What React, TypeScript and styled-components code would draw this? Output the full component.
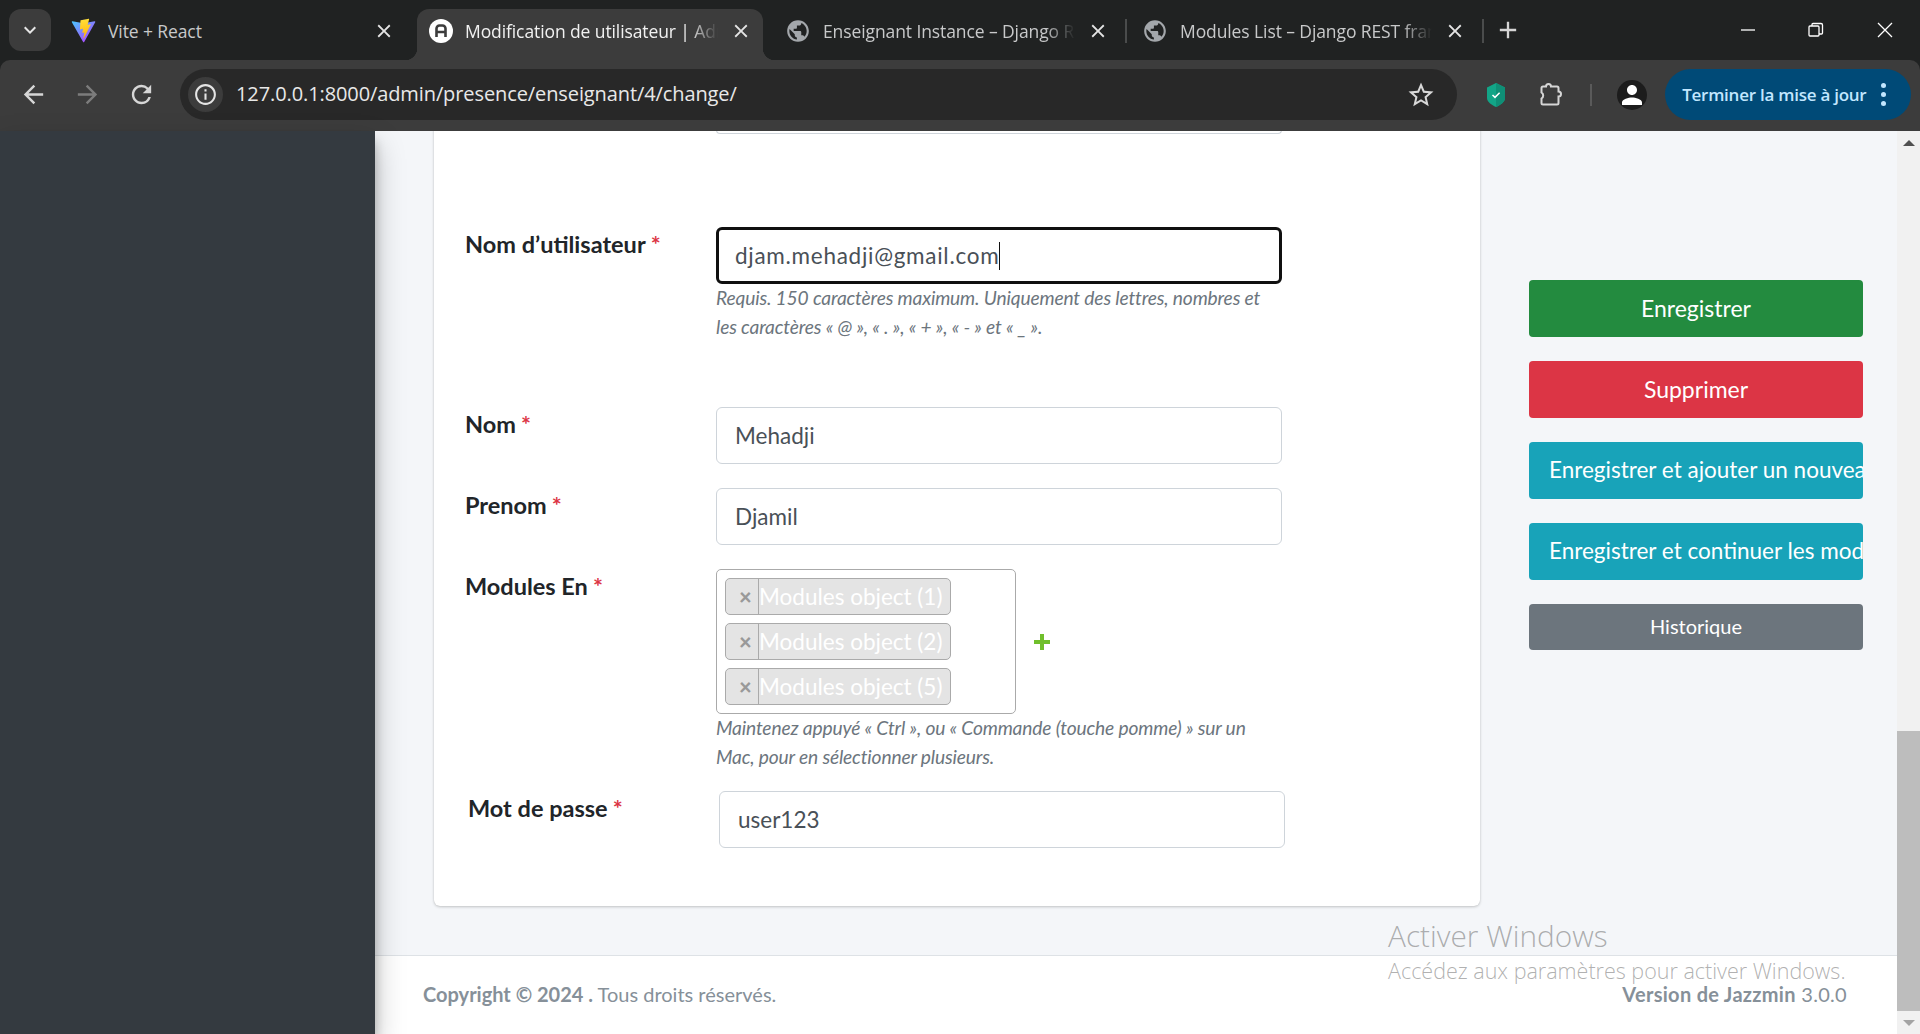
import { ReactElement, ReactNode } from "react"
import styled, { createGlobalStyle } from "styled-components"
import {
  MdAdd,
  MdArrowBack,
  MdArrowForward,
  MdClose,
  MdInfoOutline,
  MdKeyboardArrowDown,
  MdPerson,
  MdPublic,
  MdRefresh,
  MdStarBorder,
} from "react-icons/md"

const GlobalStyle = createGlobalStyle`
  html, body {
    margin: 0;
    padding: 0;
    overflow: hidden;
  }
  * {
    box-sizing: border-box;
  }
`

const Page = styled.div`
  display: flex;
  flex-direction: column;
  width: 1920px;
  height: 1034px;
  overflow: hidden;
  position: relative;
  background: #202222;
  font-family: Lato, "Noto Sans", sans-serif;
`

const TabStrip = styled.div`
  display: flex;
  align-items: flex-start;
  height: 60px;
  flex-shrink: 0;
  padding: 9px 0 0 9px;
  gap: 11px;
  font-family: "Open Sans", "Noto Sans", sans-serif;
`

const TabSearch = styled.div`
  display: flex;
  align-items: center;
  justify-content: center;
  width: 42px;
  height: 42px;
  margin-right: -2px;
  border-radius: 12px;
  background: #3c3c3c;
  color: #e6e6e6;
`

const Tab = styled.div<{ $active?: boolean; $divider?: boolean }>`
  display: flex;
  align-items: center;
  position: relative;
  width: 346px;
  height: 51px;
  padding: 0 11px 8px 12px;
  gap: 12px;
  border-radius: 12px 12px 0 0;
  background: ${({ $active }) => ($active ? "#3c3c3c" : "transparent")};
  color: ${({ $active }) => ($active ? "#f1f1f1" : "#c8c9ca")};

  &::after {
    content: "";
    display: ${({ $divider }) => ($divider ? "block" : "none")};
    position: absolute;
    right: -7px;
    top: 10px;
    width: 2px;
    height: 24px;
    background: #4a4c4c;
  }
`

const TabCorner = styled.span<{ $side: "left" | "right" }>`
  position: absolute;
  bottom: 0;
  ${({ $side }) => $side}: -12px;
  width: 12px;
  height: 12px;
  background: radial-gradient(
    circle at ${({ $side }) => ($side === "left" ? "0 0" : "100% 0")},
    transparent 12px,
    #3c3c3c 12.5px
  );
`

const TabTitle = styled.span<{ $fade?: boolean }>`
  flex: 1;
  min-width: 0;
  overflow: hidden;
  white-space: nowrap;
  font-size: 17.5px;
  letter-spacing: -0.1px;
  mask-image: ${({ $fade }) =>
    $fade ? "linear-gradient(to right, #000 88%, transparent 100%)" : "none"};
`

const TabClose = styled(MdClose)`
  flex-shrink: 0;
  font-size: 22px;
  color: #e4e4e4;
`

const GlobeIcon = styled(MdPublic)`
  flex-shrink: 0;
  font-size: 26px;
  color: #a3a7ab;
  margin-left: -1px;
`

const NewTab = styled(MdAdd)`
  font-size: 28px;
  color: #d6d6d6;
  margin: 7px 0 0 6px;
`

const WindowControls = styled.div`
  display: flex;
  margin: -9px 0 0 auto;
`

const WindowButton = styled.div<{ $wide?: boolean }>`
  display: flex;
  align-items: center;
  justify-content: center;
  width: ${({ $wide }) => ($wide ? "70px" : "68px")};
  height: 60px;
`

const Toolbar = styled.div`
  display: flex;
  align-items: center;
  height: 71px;
  flex-shrink: 0;
  padding: 0 9px 2px 0;
  background: #3c3c3c;
  border-radius: 10px 10px 0 0;
  color: #d4d4d4;
`

const NavIcon = styled.div<{ $dim?: boolean }>`
  display: flex;
  align-items: center;
  justify-content: center;
  width: 54px;
  color: ${({ $dim }) => ($dim ? "#7c7c7c" : "#d6d6d6")};
  font-size: 29px;
`

const NavGroup = styled.div`
  display: flex;
  padding-left: 6px;
`

const Omnibox = styled.div`
  display: flex;
  align-items: center;
  width: 1278px;
  height: 51px;
  margin-left: 12px;
  padding: 0 21px 0 8px;
  border-radius: 26px;
  background: #282828;
  font-family: "Open Sans", "Noto Sans", sans-serif;
`

const SiteInfo = styled.div`
  display: flex;
  align-items: center;
  justify-content: center;
  width: 35px;
  height: 35px;
  border-radius: 50%;
  background: #3c3c3c;
  font-size: 25px;
  color: #e4e4e4;
`

const Url = styled.span`
  flex: 1;
  margin: -2px 0 0 13px;
  font-size: 20px;
  color: #e8e8e8;
  letter-spacing: -0.1px;
`

const ToolIcons = styled.div`
  display: flex;
  align-items: center;
  margin-left: 30px;
`

const ToolDivider = styled.span`
  width: 2px;
  height: 22px;
  margin: 0 25px 0 25px;
  background: #5a5a5a;
`

const PuzzleMark = styled.svg`
  width: 26px;
  height: 26px;
  margin-left: 34px;
`

const Avatar = styled.div`
  display: flex;
  align-items: flex-end;
  justify-content: center;
  width: 30px;
  height: 30px;
  border-radius: 50%;
  background: #1c1c1c;
  color: #fff;
  font-size: 30px;
  overflow: hidden;
`

const UpdatePill = styled.div`
  display: flex;
  align-items: center;
  width: 246px;
  height: 51px;
  margin-left: 18px;
  padding-left: 17px;
  gap: 15px;
  border-radius: 26px;
  background: #004a77;
  color: #c2e7ff;
  font-family: "Open Sans", "Noto Sans", sans-serif;
  font-size: 17px;
  font-weight: 600;
  letter-spacing: -0.25px;
  white-space: nowrap;
`

const Dots = styled.span`
  display: flex;
  flex-direction: column;
  gap: 4px;

  i {
    width: 5px;
    height: 5px;
    border-radius: 50%;
    background: #c2e7ff;
  }
`

const Main = styled.div`
  display: flex;
  flex: 1;
  min-height: 0;
`

const Sidebar = styled.aside`
  width: 375px;
  flex-shrink: 0;
  background: #343a40;
  box-shadow: 0 14px 28px rgba(0, 0, 0, 0.25), 0 10px 10px rgba(0, 0, 0, 0.22);
  z-index: 1;
`

const Content = styled.div`
  display: flex;
  flex-direction: column;
  flex: 1;
  min-width: 0;
  background: #f4f6f9;
`

const Body = styled.div`
  display: flex;
  align-items: flex-start;
  flex: 1;
  min-height: 0;
  padding-left: 59px;
  overflow: hidden;
`

const Card = styled.div`
  width: 1046px;
  flex-shrink: 0;
  margin-top: -20px;
  padding: 0 0 58px 31px;
  background: #fff;
  border-radius: 6px;
  box-shadow: 0 0 1px rgba(0, 0, 0, 0.125), 0 1px 3px rgba(0, 0, 0, 0.2);
`

const StubRow = styled.div`
  height: 23px;
  width: 566px;
  margin-left: 251px;
  border: 1px solid #ced4da;
  border-top: none;
  border-radius: 0 0 4px 4px;
`

const FieldRow = styled.div<{ $top: number; $shift?: number }>`
  display: grid;
  grid-template-columns: 251px 566px;
  margin-top: ${({ $top }) => $top}px;
  padding-left: ${({ $shift }) => $shift ?? 0}px;
`

const Label = styled.label`
  font-size: 23.5px;
  line-height: 34px;
  font-weight: 700;
  color: #212529;
`

const Required = styled.span`
  color: #dc3545;
  margin-left: 5px;
`

const TextField = styled.div<{ $focused?: boolean }>`
  display: flex;
  align-items: center;
  height: 57px;
  border-radius: 6px;
  border: ${({ $focused }) =>
    $focused ? "3px solid #101010" : "1px solid #ced4da"};
  padding: 0 ${({ $focused }) => ($focused ? "16px" : "18px")};
  background: #fff;
  color: #495057;
  font-size: 22.5px;
  letter-spacing: ${({ $focused }) => ($focused ? "0.72px" : "0")};
`

const Caret = styled.span`
  width: 1px;
  height: 28px;
  background: #111;
`

const HelpText = styled.div`
  margin: -1px 0 1px;
  font-size: 19.2px;
  line-height: 29px;
  font-style: italic;
  color: #6c757d;
  letter-spacing: -0.15px;
`

const SelectLine = styled.div`
  display: flex;
  align-items: center;
  gap: 14px;
`

const MultiSelect = styled.div`
  display: flex;
  flex-direction: column;
  gap: 8px;
  width: 300px;
  height: 145px;
  padding: 8px;
  border: 1px solid #aaa;
  border-radius: 5px;
`

const Chip = styled.div`
  display: flex;
  align-items: center;
  width: 226px;
  height: 37px;
  flex-shrink: 0;
  background: #e4e4e4;
  border: 1px solid #aaa;
  border-radius: 5px;
  color: #fff;
  font-size: 22.5px;
  overflow: hidden;
`

const ChipRemove = styled.span`
  display: flex;
  align-items: center;
  justify-content: center;
  width: 33px;
  height: 100%;
  padding-left: 7px;
  border-right: 1px solid #aaa;
  color: #999;
  font-size: 22px;
  font-weight: 900;
`

const AddIcon = styled.svg`
  width: 16px;
  height: 16px;
  margin-left: 4px;
`

const SideColumn = styled.div`
  display: flex;
  flex-direction: column;
  gap: 24px;
  width: 334px;
  margin: 149px 0 0 49px;
`

const ActionButton = styled.div<{
  $color: string
  $small?: boolean
  $clipped?: boolean
}>`
  display: block;
  height: ${({ $small }) => ($small ? "46px" : "57px")};
  line-height: ${({ $small }) => ($small ? "45px" : "56px")};
  padding-left: ${({ $clipped }) => ($clipped ? "20px" : "0")};
  border-radius: 4px;
  background: ${({ $color }) => $color};
  color: #fff;
  font-size: ${({ $small, $clipped }) =>
    $small ? "20px" : $clipped ? "22.5px" : "23px"};
  text-align: ${({ $clipped }) => ($clipped ? "left" : "center")};
  white-space: nowrap;
  overflow: hidden;
`

const Footer = styled.footer`
  display: flex;
  justify-content: space-between;
  align-items: flex-start;
  height: 79px;
  flex-shrink: 0;
  padding: 23px 50px 0 48px;
  border-top: 1px solid #dee2e6;
  background: #fff;
  color: #869099;
  font-size: 20px;
  line-height: 30px;
`

const FooterStrong = styled.strong`
  font-weight: 700;
`

const FooterVersion = styled.span`
  letter-spacing: 0.3px;
`

const Scrollbar = styled.div`
  display: flex;
  flex-direction: column;
  width: 23px;
  flex-shrink: 0;
  background: #f1f1f1;
`

const ScrollArrow = styled.div<{ $down?: boolean }>`
  display: flex;
  align-items: center;
  justify-content: center;
  height: 23px;
  flex-shrink: 0;

  &::before {
    content: "";
    border-left: 6px solid transparent;
    border-right: 6px solid transparent;
    ${({ $down }) =>
      $down ? "border-top: 6px solid #a3a3a3;" : "border-bottom: 6px solid #505050;"}
  }
`

const ScrollSpace = styled.div`
  flex: 1;
`

const ScrollThumb = styled.div`
  height: 280px;
  background: #bdbdbd;
`

const Watermark = styled.div`
  position: absolute;
  left: 1388px;
  top: 916px;
  z-index: 2;
  color: rgba(110, 110, 110, 0.55);
  font-family: "Open Sans", "Noto Sans", sans-serif;
  font-weight: 300;
  pointer-events: none;
`

const WatermarkTitle = styled.div`
  font-size: 29.8px;
  line-height: 40px;
`

const WatermarkText = styled.div`
  font-size: 21.5px;
  line-height: 30px;
`

const ViteMark = styled.svg`
  width: 27px;
  height: 27px;
  flex-shrink: 0;
  margin: 0 -1px 0 -2px;
`

const FaviconMark = styled.svg`
  width: 24px;
  height: 24px;
  flex-shrink: 0;
`

const ShieldMark = styled.svg`
  width: 18px;
  height: 24px;
  flex-shrink: 0;
`

function ViteLogo(): ReactElement {
  return (
    <ViteMark viewBox="0 0 32 32">
      <defs>
        <linearGradient id="viteA" x1="0.6" y1="3.3" x2="23.5" y2="34.4" gradientUnits="userSpaceOnUse">
          <stop stopColor="#41D1FF" />
          <stop offset="1" stopColor="#BD34FE" />
        </linearGradient>
        <linearGradient id="viteB" x1="19.4" y1="0.8" x2="23.6" y2="29.3" gradientUnits="userSpaceOnUse">
          <stop stopColor="#FFEA83" />
          <stop offset=".08" stopColor="#FFDD35" />
          <stop offset="1" stopColor="#FFA800" />
        </linearGradient>
      </defs>
      <path
        fill="url(#viteA)"
        d="M29.88 6.15 16.8 29.53a.71.71 0 0 1-1.24 0L2.22 6.15a.71.71 0 0 1 .74-1.05l13.09 2.34a.7.7 0 0 0 .25 0l12.82-2.34a.71.71 0 0 1 .76 1.05Z"
      />
      <path
        fill="url(#viteB)"
        d="M22.36 2.05 12.7 3.94a.35.35 0 0 0-.28.33l-.6 10.05a.35.35 0 0 0 .43.36l2.69-.62a.35.35 0 0 1 .42.41l-.8 3.91a.35.35 0 0 0 .45.41l1.66-.5a.35.35 0 0 1 .45.41l-1.27 6.14c-.08.38.43.59.64.26l.14-.22 7.86-15.69a.35.35 0 0 0-.38-.5l-2.76.53a.35.35 0 0 1-.41-.44l1.8-6.24a.35.35 0 0 0-.41-.44Z"
      />
    </ViteMark>
  )
}

function JazzminLogo(): ReactElement {
  return (
    <FaviconMark viewBox="0 0 24 24">
      <circle cx="12" cy="12" r="12" fill="#fff" />
      <path
        d="M7.5 18V9.5a3 3 0 0 1 3-3h3a3 3 0 0 1 3 3V18M7.5 13h9"
        fill="none"
        stroke="#3c3c3c"
        strokeWidth="2.6"
      />
    </FaviconMark>
  )
}

function ShieldIcon(): ReactElement {
  return (
    <ShieldMark viewBox="0 0 18 24">
      <path d="M9 0 18 4.5V15c0 4-4.5 7-9 9-4.5-2-9-5-9-9V4.5Z" fill="#12a587" />
      <path d="M9 0 18 4.5V15c0 4-4.5 7-9 9Z" fill="#0f8f76" />
      <path d="m5.5 12 2.5 2.4 4.6-4.6" fill="none" stroke="#fff" strokeWidth="1.5" />
    </ShieldMark>
  )
}

function PuzzleIcon(): ReactElement {
  return (
    <PuzzleMark viewBox="0 0 26 26">
      <path
        d="M7 4.5a2.5 2.5 0 0 1 5 0H18a1.5 1.5 0 0 1 1.5 1.5V9.5a2.5 2.5 0 0 1 0 5V21a1.5 1.5 0 0 1-1.5 1.5H4A1.5 1.5 0 0 1 2.5 21V16.5a3.5 3.5 0 0 0 0-6V6A1.5 1.5 0 0 1 4 4.5Z"
        fill="none"
        stroke="#d6d6d6"
        strokeWidth="2"
      />
    </PuzzleMark>
  )
}

function WindowGlyph({ kind }: { kind: "min" | "restore" | "close" }): ReactElement {
  return (
    <svg width="16" height="16" viewBox="0 0 16 16" fill="none" stroke="#fff" strokeWidth="1.3">
      {kind === "min" && <path d="M1 8h14" />}
      {kind === "restore" && (
        <>
          <rect x="1" y="4" width="10" height="10" rx="1" />
          <path d="M4 4V2.5A1 1 0 0 1 5 1.5h8a1.5 1.5 0 0 1 1.5 1.5v8a1 1 0 0 1-1 1H11" />
        </>
      )}
      {kind === "close" && <path d="M1 1l14 14M15 1 1 15" />}
    </svg>
  )
}

function Field({
  label,
  top,
  shift,
  children,
}: {
  label: string
  top: number
  shift?: number
  children: ReactNode
}): ReactElement {
  return (
    <FieldRow $top={top} $shift={shift}>
      <Label>
        {label}
        <Required>*</Required>
      </Label>
      <div>{children}</div>
    </FieldRow>
  )
}

const modules = ["Modules object (1)", "Modules object (2)", "Modules object (5)"]

function App(): ReactElement {
  return (
    <Page>
      <GlobalStyle />
      <TabStrip>
        <TabSearch>
          <MdKeyboardArrowDown size={24} />
        </TabSearch>
        <Tab>
          <ViteLogo />
          <TabTitle>Vite + React</TabTitle>
          <TabClose />
        </Tab>
        <Tab $active>
          <TabCorner $side="left" />
          <JazzminLogo />
          <TabTitle $fade>Modification de utilisateur | Administration</TabTitle>
          <TabClose />
          <TabCorner $side="right" />
        </Tab>
        <Tab $divider>
          <GlobeIcon />
          <TabTitle $fade>Enseignant Instance – Django REST framework</TabTitle>
          <TabClose />
        </Tab>
        <Tab $divider>
          <GlobeIcon />
          <TabTitle $fade>Modules List – Django REST framework</TabTitle>
          <TabClose />
        </Tab>
        <NewTab />
        <WindowControls>
          <WindowButton>
            <WindowGlyph kind="min" />
          </WindowButton>
          <WindowButton>
            <WindowGlyph kind="restore" />
          </WindowButton>
          <WindowButton $wide>
            <WindowGlyph kind="close" />
          </WindowButton>
        </WindowControls>
      </TabStrip>

      <Toolbar>
        <NavGroup>
          <NavIcon>
            <MdArrowBack />
          </NavIcon>
          <NavIcon $dim>
            <MdArrowForward />
          </NavIcon>
          <NavIcon>
            <MdRefresh />
          </NavIcon>
        </NavGroup>
        <Omnibox>
          <SiteInfo>
            <MdInfoOutline />
          </SiteInfo>
          <Url>127.0.0.1:8000/admin/presence/enseignant/4/change/</Url>
          <MdStarBorder size={30} color="#d8d8d8" />
        </Omnibox>
        <ToolIcons>
          <ShieldIcon />
          <PuzzleIcon />
          <ToolDivider />
          <Avatar>
            <MdPerson />
          </Avatar>
        </ToolIcons>
        <UpdatePill>
          Terminer la mise à jour
          <Dots>
            <i />
            <i />
            <i />
          </Dots>
        </UpdatePill>
      </Toolbar>

      <Main>
        <Sidebar />
        <Content>
          <Body>
            <Card>
              <StubRow />
              <Field label="Nom d’utilisateur" top={93}>
                <TextField $focused>
                  djam.mehadji@gmail.com
                  <Caret />
                </TextField>
                <HelpText>
                  Requis. 150 caractères maximum. Uniquement des lettres, nombres et
                  <br />
                  les caractères « @ », « . », « + », « - » et « _ ».
                </HelpText>
              </Field>
              <Field label="Nom" top={65}>
                <TextField>Mehadji</TextField>
              </Field>
              <Field label="Prenom" top={24}>
                <TextField>Djamil</TextField>
              </Field>
              <Field label="Modules En" top={24}>
                <SelectLine>
                  <MultiSelect>
                    {modules.map((name) => (
                      <Chip key={name}>
                        <ChipRemove>×</ChipRemove>
                        {name}
                      </Chip>
                    ))}
                  </MultiSelect>
                  <AddIcon viewBox="0 0 16 16">
                    <path d="M6 0h4v6h6v4h-6v6H6v-6H0V6h6Z" fill="#70bf2b" />
                  </AddIcon>
                </SelectLine>
                <HelpText>
                  Maintenez appuyé « Ctrl », ou « Commande (touche pomme) » sur un
                  <br />
                  Mac, pour en sélectionner plusieurs.
                </HelpText>
              </Field>
              <Field label="Mot de passe" top={19} shift={3}>
                <TextField>user123</TextField>
              </Field>
            </Card>
            <SideColumn>
              <ActionButton $color="#238b3f">Enregistrer</ActionButton>
              <ActionButton $color="#dc3545">Supprimer</ActionButton>
              <ActionButton $color="#18a3b9" $clipped>
                Enregistrer et ajouter un nouveau
              </ActionButton>
              <ActionButton $color="#18a3b9" $clipped>
                Enregistrer et continuer les modifications
              </ActionButton>
              <ActionButton $color="#6c757d" $small>
                Historique
              </ActionButton>
            </SideColumn>
          </Body>
          <Footer>
            <span>
              <FooterStrong>Copyright © 2024 .</FooterStrong> Tous droits réservés.
            </span>
            <FooterVersion>
              <FooterStrong>Version de Jazzmin</FooterStrong> 3.0.0
            </FooterVersion>
          </Footer>
        </Content>
        <Scrollbar>
          <ScrollArrow />
          <ScrollSpace />
          <ScrollThumb />
          <ScrollArrow $down />
        </Scrollbar>
      </Main>

      <Watermark>
        <WatermarkTitle>Activer Windows</WatermarkTitle>
        <WatermarkText>Accédez aux paramètres pour activer Windows.</WatermarkText>
      </Watermark>
    </Page>
  )
}

export default App
